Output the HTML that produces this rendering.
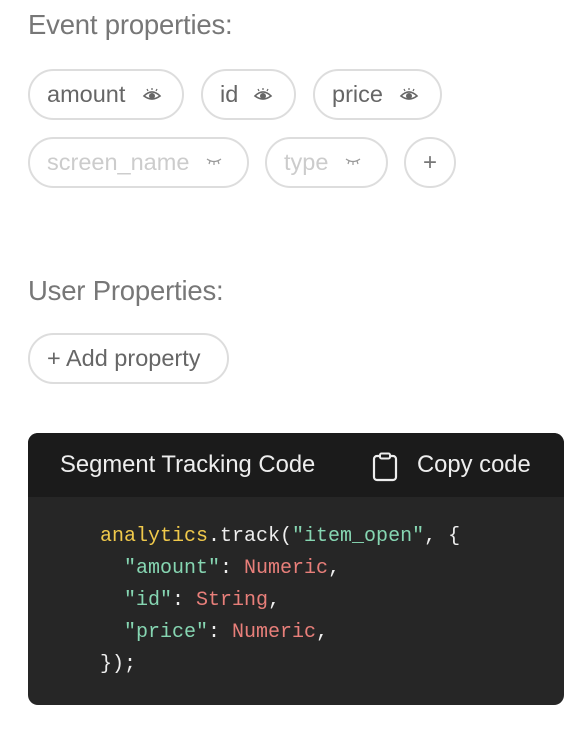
<!DOCTYPE html>
<html><head><style>
body{margin:0;width:584px;height:738px;background:#fff;font-family:"Liberation Sans",Arial,sans-serif;position:relative;overflow:hidden}
.t{position:absolute;left:28px;font-size:27.5px;color:#777;line-height:30px;letter-spacing:-0.2px}
.p{position:absolute;box-sizing:border-box;height:51px;border:2px solid #ddd;border-radius:26px;font-size:23.5px;color:#666;line-height:47px;padding-left:17px}
.p.d{color:#ccc}
.p svg{position:absolute;top:17px}
.code{position:absolute;left:28px;top:433px;width:536px;height:272px;background:#262626;border-radius:10px;overflow:hidden}
.hd{height:64px;background:#1b1b1b;color:#eee;font-size:23.8px;line-height:64px;position:relative}
pre{margin:0;position:absolute;left:72px;top:88px;font-family:"Liberation Mono","DejaVu Sans Mono",monospace;font-size:20px;line-height:32px;color:#eee}
.y{color:#f0c94b}.g{color:#86d6b2}.r{color:#e87f7a}
</style></head><body>
<div class="t" style="top:10px">Event properties:</div>
<div class="p" style="left:28px;top:69px;width:156px">amount<svg style="left:112px" width="20" height="14" viewBox="0 0 20 14"><path d="M2 8Q10 0 18 8Q10 14 2 8Z" fill="none" stroke="#666" stroke-width="1.6"/><circle cx="10" cy="8" r="3" fill="#666"/><path d="M6 3L5 1M10 2V0M14 3L15 1" stroke="#666" stroke-width="1.2"/></svg></div>
<div class="p" style="left:201px;top:69px;width:95px">id<svg style="left:50px" width="20" height="14" viewBox="0 0 20 14"><path d="M2 8Q10 0 18 8Q10 14 2 8Z" fill="none" stroke="#666" stroke-width="1.6"/><circle cx="10" cy="8" r="3" fill="#666"/><path d="M6 3L5 1M10 2V0M14 3L15 1" stroke="#666" stroke-width="1.2"/></svg></div>
<div class="p" style="left:313px;top:69px;width:129px">price<svg style="left:84px" width="20" height="14" viewBox="0 0 20 14"><path d="M2 8Q10 0 18 8Q10 14 2 8Z" fill="none" stroke="#666" stroke-width="1.6"/><circle cx="10" cy="8" r="3" fill="#666"/><path d="M6 3L5 1M10 2V0M14 3L15 1" stroke="#666" stroke-width="1.2"/></svg></div>
<div class="p d" style="left:28px;top:137px;width:221px">screen_name<svg style="left:176px;top:18px" width="16" height="8" viewBox="0 0 16 8"><path d="M1 2Q8 7 15 2M4 4L3 7M8 5V8M12 4L13 7" fill="none" stroke="#999" stroke-width="1.2"/></svg></div>
<div class="p d" style="left:265px;top:137px;width:123px">type<svg style="left:78px;top:18px" width="16" height="8" viewBox="0 0 16 8"><path d="M1 2Q8 7 15 2M4 4L3 7M8 5V8M12 4L13 7" fill="none" stroke="#999" stroke-width="1.2"/></svg></div>
<div class="p" style="left:404px;top:137px;width:52px;padding:0;text-align:center;font-size:24px;color:#777">+</div>
<div class="t" style="top:276px">User Properties:</div>
<div class="p" style="left:28px;top:333px;width:201px">+ Add property</div>
<div class="code">
<div class="hd"><span style="position:absolute;left:32px">Segment Tracking Code</span>
<svg style="position:absolute;left:344px;top:19px" width="26" height="30" viewBox="0 0 26 30"><rect x="2" y="4" width="22" height="24" rx="3" fill="none" stroke="#eee" stroke-width="2.2"/><rect x="8" y="1.5" width="10" height="5" rx="1.5" fill="#1b1b1b" stroke="#eee" stroke-width="2"/></svg>
<span style="position:absolute;left:389px">Copy code</span></div>
<pre><span class="y">analytics</span>.track(<span class="g">"item_open"</span>, {
  <span class="g">"amount"</span>: <span class="r">Numeric</span>,
  <span class="g">"id"</span>: <span class="r">String</span>,
  <span class="g">"price"</span>: <span class="r">Numeric</span>,
});</pre>
</div>
</body></html>
